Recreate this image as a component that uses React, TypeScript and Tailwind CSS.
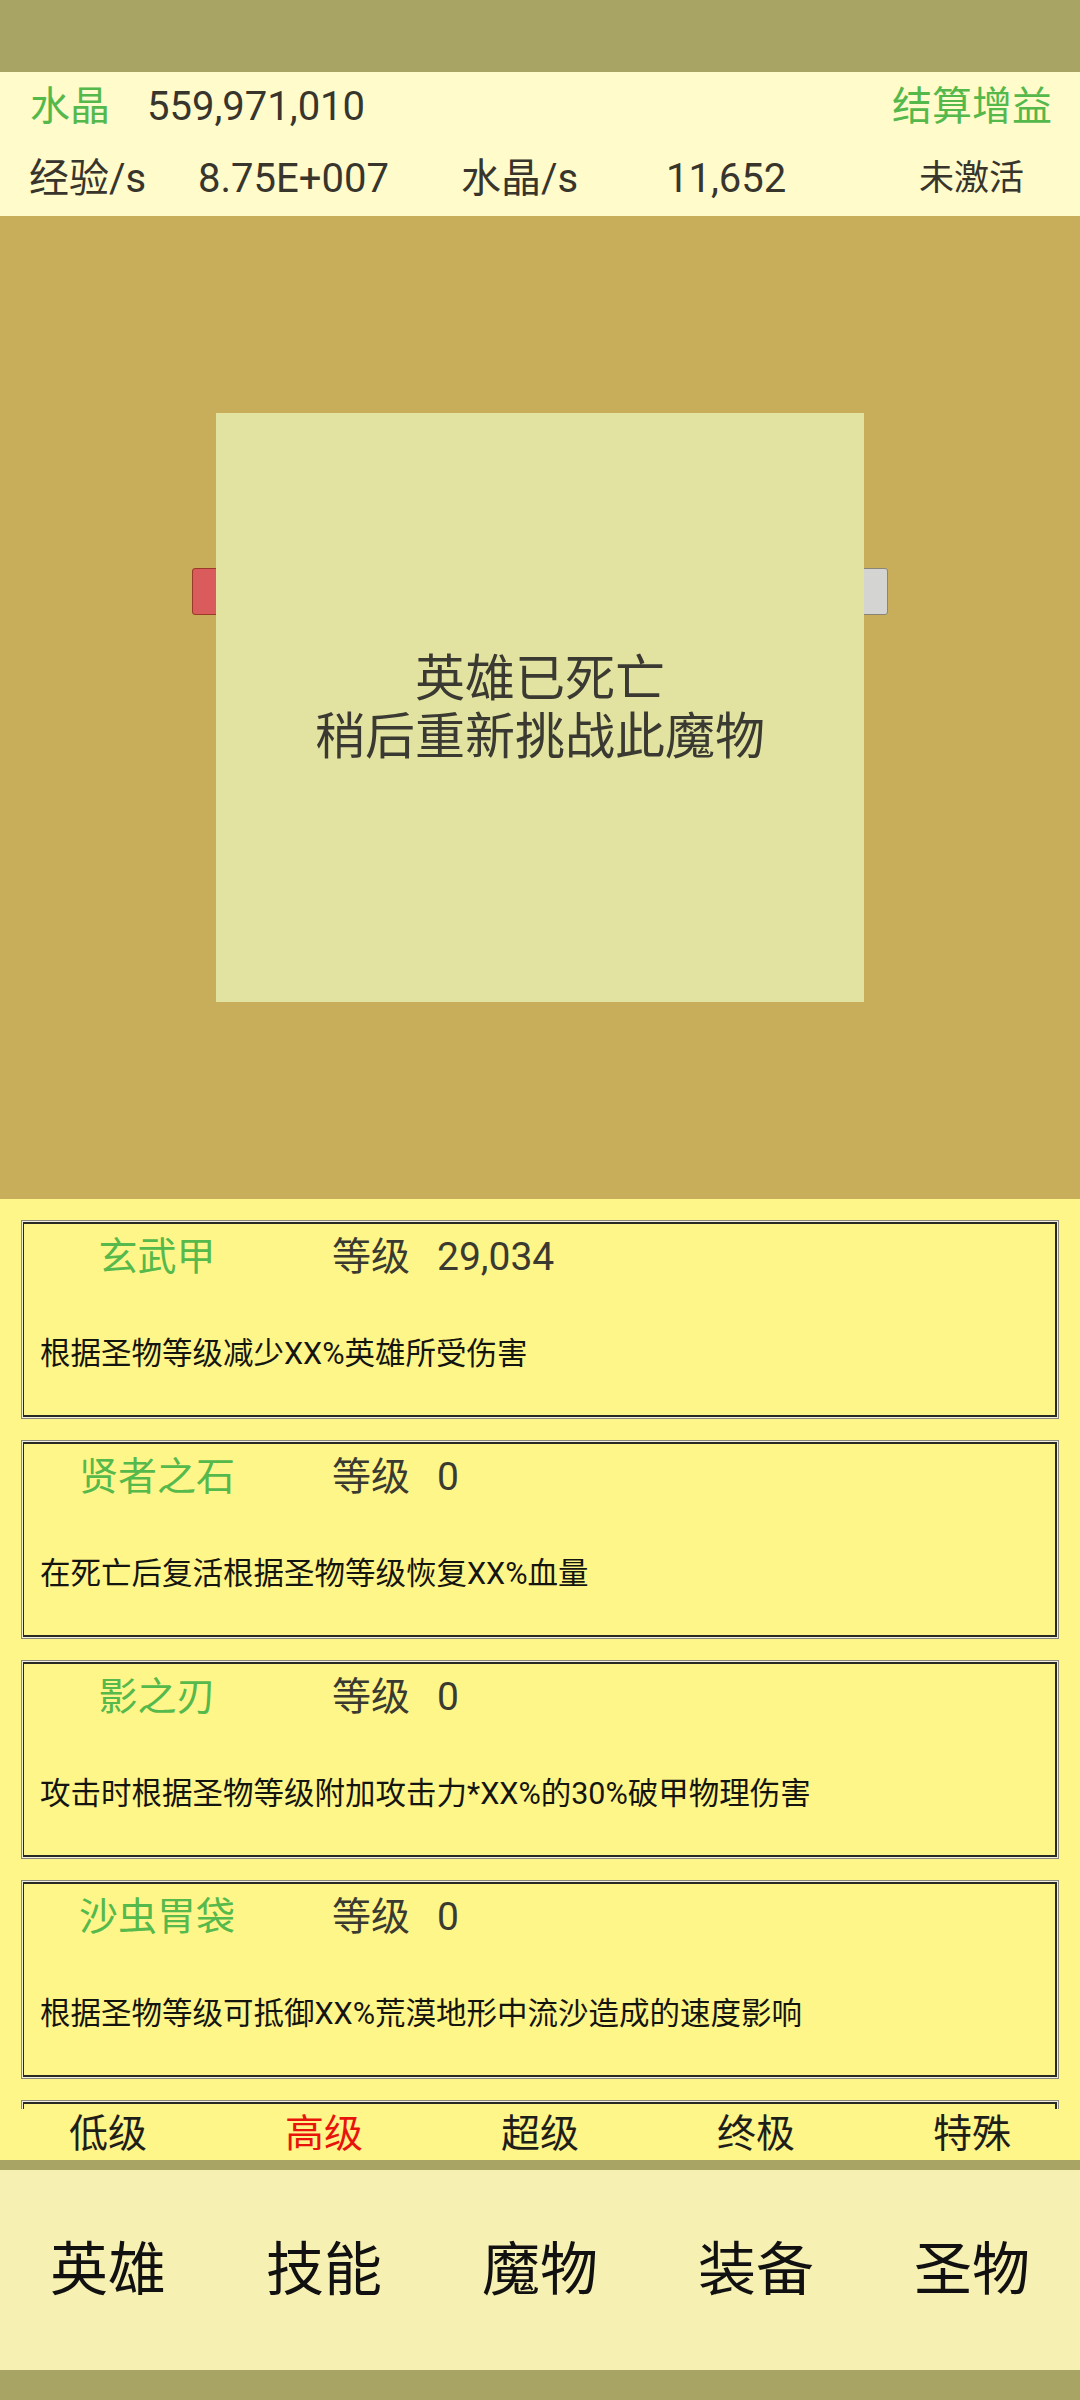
const FONT = { fontFamily: '"Roboto", "Noto Sans CJK SC", sans-serif' };

const RELICS = [
  { name: "玄武甲", level: "29,034", desc: "根据圣物等级减少XX%英雄所受伤害" },
  { name: "贤者之石", level: "0", desc: "在死亡后复活根据圣物等级恢复XX%血量" },
  { name: "影之刃", level: "0", desc: "攻击时根据圣物等级附加攻击力*XX%的30%破甲物理伤害" },
  { name: "沙虫胃袋", level: "0", desc: "根据圣物等级可抵御XX%荒漠地形中流沙造成的速度影响" },
  { name: "", level: "", desc: "" },
];

const TIERS = ["低级", "高级", "超级", "终极", "特殊"];
const NAV = ["英雄", "技能", "魔物", "装备", "圣物"];

export default function App() {
  return (
    <div className="w-[1080px] h-[2400px] flex flex-col overflow-hidden" style={FONT}>
      <div className="h-[72px] shrink-0 bg-[#a8a463]" />

      <div className="h-[144px] shrink-0 bg-[#fffbcb] text-[40px] text-[#37352c]">
        <div className="h-[70px] flex items-center pl-[30px] pr-[28px]">
          <span className="w-[117px] text-[#55b84b]">水晶</span>
          <span>559,971,010</span>
          <span className="ml-auto text-[#55b84b]">结算增益</span>
        </div>
        <div className="h-[74px] flex items-center pl-[29px]">
          <span className="w-[169px]">经验/s</span>
          <span className="w-[263px]">8.75E+007</span>
          <span className="w-[205px]">水晶/s</span>
          <span className="w-[253px]">11,652</span>
          <span className="text-[35px]">未激活</span>
        </div>
      </div>

      <div className="h-[983px] shrink-0 bg-[#c8ad5a] relative">
        <div className="pt-[352px] pl-[192px]">
          <div className="w-[696px] h-[47px] flex rounded-[3px] overflow-hidden">
            <div className="w-[300px] bg-[#d95b5b] border border-r-0 border-[#9b3a2a] rounded-l-[3px]" />
            <div className="flex-1 bg-[#d4d4d2] border border-l-0 border-[#8a8677] rounded-r-[3px]" />
          </div>
        </div>
        <div className="absolute left-[216px] top-[197px] w-[648px] h-[589px] bg-[#e2e3a0] flex flex-col items-center justify-center text-[50px] leading-[58px] text-[#3a3a33]">
          <div>英雄已死亡</div>
          <div>稍后重新挑战此魔物</div>
        </div>
      </div>

      <div className="h-[910px] shrink-0 bg-[#fff68a] overflow-hidden pt-[21px] px-[21px] flex flex-col gap-[21px]">
        {RELICS.map((r, i) => (
          <div key={i} className="h-[199px] shrink-0 border border-[#8a8a80] bg-[#f2f0dc] p-[1px]">
            <div className="h-full border-2 border-[#2a2a25] border-l-[1.5px] bg-[#fff68a] flex flex-col">
              <div className="h-[66px] flex items-center text-[39px]">
                <span className="w-[266px] text-center text-[#56b94b]">{r.name}</span>
                {r.name && (
                  <>
                    <span className="ml-[42px] text-[#3b3a30]">等级</span>
                    <span className="ml-[27px] text-[#3b3a30]">{r.level}</span>
                  </>
                )}
              </div>
              <div className="h-[56px] mt-[36px] flex items-center pl-[16px] text-[30.5px] text-[#151510]">{r.desc}</div>
            </div>
          </div>
        ))}
      </div>

      <div className="h-[51px] shrink-0 bg-[#fff68a] grid grid-cols-5 text-[39px] text-[#1f1f1a]">
        {TIERS.map((t) => (
          <div key={t} className={`flex items-center justify-center -mt-[4px] ${t === "高级" ? "text-[#e8140c]" : ""}`}>{t}</div>
        ))}
      </div>

      <div className="h-[10px] shrink-0 bg-[#a8a463]" />

      <div className="h-[200px] shrink-0 bg-[#f7f0b3] grid grid-cols-5 text-[58px] text-[#111]">
        {NAV.map((n) => (
          <div key={n} className="flex items-center justify-center">{n}</div>
        ))}
      </div>

      <div className="h-[30px] shrink-0 bg-[#a8a463]" />
    </div>
  );
}
